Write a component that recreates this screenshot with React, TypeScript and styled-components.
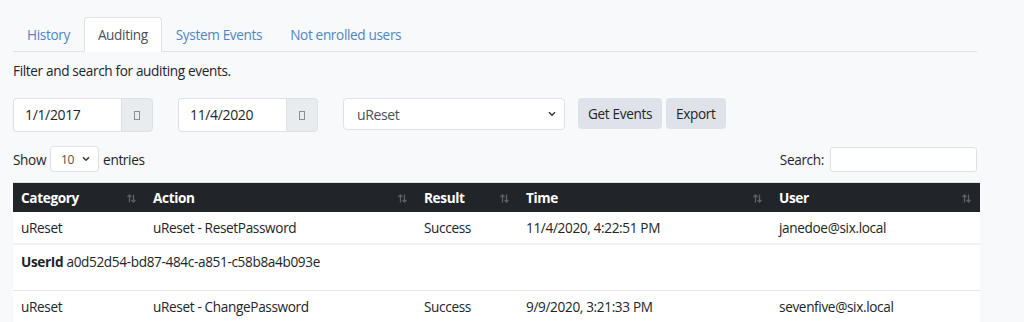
import React from "react";
import styled, { createGlobalStyle } from "styled-components";

const GlobalStyle = createGlobalStyle`
  html, body { margin: 0; padding: 0; background: #f8f9fa; }
  body {
    font-family: "Open Sans", "Noto Sans", Arial, sans-serif;
    font-size: 13.6px;
    line-height: 21px;
    color: #212529;
    letter-spacing: -0.35px;
  }
  * { box-sizing: border-box; }
`;

const Page = styled.div`
  width: 1024px;
  height: 322px;
  overflow: hidden;
  padding: 17px 44px 0 13px;
`;

const Tabs = styled.ul`
  display: flex;
  list-style: none;
  margin: 0;
  padding: 0;
  border-bottom: 1px solid #dee2e6;
  width: 964px;
`;

const Tab = styled.li<{ $active?: boolean }>`
  margin-bottom: -1px;
  padding: 6px 13px 6px;
  border: 1px solid ${(p) => (p.$active ? "#dee2e6" : "transparent")};
  border-bottom-color: ${(p) => (p.$active ? "#fff" : "transparent")};
  border-radius: 4px 4px 0 0;
  background: ${(p) => (p.$active ? "#fff" : "transparent")};
  color: ${(p) => (p.$active ? "#495057" : "#4e86c4")};
  line-height: 21px;
`;

const Intro = styled.p`
  margin: 8px 0 0;
`;

const FilterRow = styled.div`
  display: flex;
  align-items: flex-start;
  margin-top: 17px;
`;

const DateGroup = styled.div`
  display: flex;
  width: 140px;
  height: 34px;
  margin-right: 25px;
`;

const DateInput = styled.div`
  flex: 1;
  background: #fff;
  border: 1px solid #dde1e5;
  border-right: none;
  border-radius: 4px 0 0 4px;
  padding: 5px 11px;
  font-size: 14px;
  line-height: 22px;
`;

const CalendarAddon = styled.div`
  width: 32px;
  display: flex;
  align-items: center;
  justify-content: center;
  background: #e9ecef;
  border: 1px solid #dde1e5;
  border-radius: 0 4px 4px 0;
`;

const Tofu = styled.span`
  display: block;
  width: 6px;
  height: 9px;
  border: 1px solid #8a8f95;
  margin-top: 1px;
`;

const SelectBox = styled.div<{ $w: number; $h: number; $small?: boolean }>`
  position: relative;
  width: ${(p) => p.$w}px;
  height: ${(p) => p.$h}px;
  background: #fff;
  border: 1px solid #dde1e5;
  border-radius: 4px;
  display: flex;
  align-items: center;
  padding-left: ${(p) => (p.$small ? 10 : 13)}px;
  font-size: ${(p) => (p.$small ? 12 : 14)}px;
  color: #495057;
`;

const Chevron = styled.svg`
  position: absolute;
  right: 8px;
  top: 50%;
  margin-top: -3px;
`;

const Buttons = styled.div`
  display: flex;
  gap: 4px;
  margin-left: 13px;
`;

const Button = styled.button`
  height: 31px;
  padding: 0 10px;
  border: none;
  border-radius: 4px;
  background: #dfe2e8;
  color: #212529;
  font-family: inherit;
  font-size: 13.6px;
  letter-spacing: -0.35px;
`;

const ControlsRow = styled.div`
  display: flex;
  justify-content: space-between;
  align-items: center;
  margin-top: 14px;
  width: 964px;
`;

const Inline = styled.label`
  display: flex;
  align-items: center;
  gap: 4px;
`;

const SearchInput = styled.div`
  width: 147px;
  height: 25px;
  background: #fff;
  border: 1px solid #dde1e5;
  border-radius: 3px;
  margin-left: 2px;
`;

const Table = styled.table`
  margin-top: 10px;
  width: 967px;
  border-collapse: collapse;
  table-layout: fixed;
  background: #fff;
`;

const Th = styled.th`
  position: relative;
  background: #212529;
  color: #fff;
  text-align: left;
  font-weight: 700;
  padding: 4px 8px;
  line-height: 21px;
  border-top: 1px solid #dee2e6;
`;

const SortIcon = styled.svg`
  position: absolute;
  right: 9px;
  top: 11px;
`;

const Td = styled.td`
  padding: 5px 8px;
  line-height: 21px;
  color: #212529;
`;

const Row = styled.tr<{ $heavy?: boolean }>`
  border-bottom: ${(p) => (p.$heavy ? "2px solid #eff1f3" : "1px solid #e3e6e9")};
`;

const ChildCell = styled.td`
  padding: 6px 8px 18px;
  line-height: 21px;
`;

const Sort = () => (
  <SortIcon width="9" height="9" viewBox="0 0 9 9" fill="none" stroke="#5b6168" strokeWidth="1.3">
    <path d="M2.5 8.5V1M0.5 3L2.5 1L4.5 3" />
    <path d="M6.5 0.5V8M4.5 6L6.5 8L8.5 6" />
  </SortIcon>
);

const Down = () => (
  <Chevron width="8" height="6" viewBox="0 0 8 6" fill="none" stroke="#343a40" strokeWidth="1.6">
    <path d="M1 1.2L4 4.2L7 1.2" />
  </Chevron>
);

const columns = [
  { name: "Category", w: 132 },
  { name: "Action", w: 271 },
  { name: "Result", w: 102 },
  { name: "Time", w: 253 },
  { name: "User", w: 209 },
];

export default function App() {
  return (
    <Page>
      <GlobalStyle />
      <Tabs>
        <Tab>History</Tab>
        <Tab $active>Auditing</Tab>
        <Tab>System Events</Tab>
        <Tab>Not enrolled users</Tab>
      </Tabs>
      <Intro>Filter and search for auditing events.</Intro>
      <FilterRow>
        <DateGroup>
          <DateInput>1/1/2017</DateInput>
          <CalendarAddon><Tofu /></CalendarAddon>
        </DateGroup>
        <DateGroup>
          <DateInput>11/4/2020</DateInput>
          <CalendarAddon><Tofu /></CalendarAddon>
        </DateGroup>
        <SelectBox $w={222} $h={32}>
          uReset
          <Down />
        </SelectBox>
        <Buttons>
          <Button>Get Events</Button>
          <Button>Export</Button>
        </Buttons>
      </FilterRow>
      <ControlsRow>
        <Inline>
          Show
          <SelectBox $w={49} $h={26} $small>
            10
            <Down />
          </SelectBox>
          entries
        </Inline>
        <Inline>
          Search:
          <SearchInput />
        </Inline>
      </ControlsRow>
      <Table>
        <colgroup>
          {columns.map((c) => (
            <col key={c.name} style={{ width: c.w }} />
          ))}
        </colgroup>
        <thead>
          <tr>
            {columns.map((c) => (
              <Th key={c.name}>
                {c.name}
                <Sort />
              </Th>
            ))}
          </tr>
        </thead>
        <tbody>
          <Row $heavy>
            <Td>uReset</Td>
            <Td>uReset - ResetPassword</Td>
            <Td>Success</Td>
            <Td>11/4/2020, 4:22:51 PM</Td>
            <Td>janedoe@six.local</Td>
          </Row>
          <Row>
            <ChildCell colSpan={5}>
              <b>UserId</b> a0d52d54-bd87-484c-a851-c58b8a4b093e
            </ChildCell>
          </Row>
          <Row>
            <Td>uReset</Td>
            <Td>uReset - ChangePassword</Td>
            <Td>Success</Td>
            <Td>9/9/2020, 3:21:33 PM</Td>
            <Td>sevenfive@six.local</Td>
          </Row>
        </tbody>
      </Table>
    </Page>
  );
}
